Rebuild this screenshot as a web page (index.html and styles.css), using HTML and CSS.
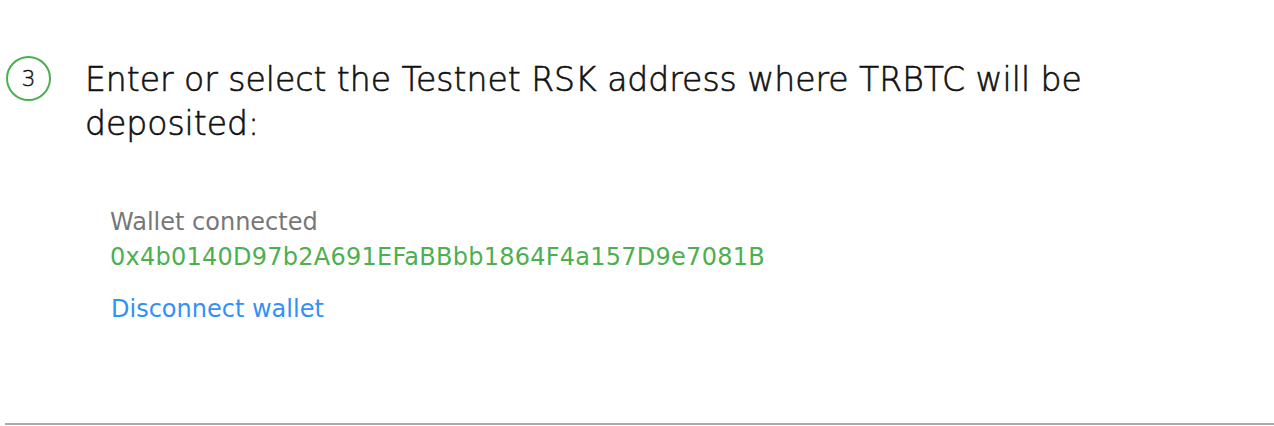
FILE: index.html
```html
<!DOCTYPE html>
<html>
<head>
<meta charset="utf-8">
<link rel="stylesheet" href="styles.css">
</head>
<body>
<div class="page">
  <div class="step">
    <div class="step-num">3</div>
    <div class="step-body">
      <h2 class="step-title">Enter or select the Testnet RSK address where TRBTC will be deposited:</h2>
      <div class="wallet">
        <div class="wallet-label">Wallet connected</div>
        <div class="wallet-address">0x4b0140D97b2A691EFaBBbb1864F4a157D9e7081B</div>
        <a class="wallet-disconnect" href="#">Disconnect wallet</a>
      </div>
    </div>
  </div>
  <hr class="divider">
</div>
</body>
</html>
```
FILE: styles.css
```css
html, body {
  margin: 0;
  padding: 0;
  background: #ffffff;
}
body {
  font-family: "DejaVu Sans", "Noto Sans", sans-serif;
  color: #1c1c1c;
}
.page {
  padding: 56px 0 0 5px;
}
.step {
  display: flex;
  align-items: flex-start;
  gap: 34px;
  height: 367px;
}
.step-num {
  flex: none;
  width: 41px;
  height: 41px;
  border: 2px solid #4caf50;
  border-radius: 50%;
  display: flex;
  align-items: center;
  justify-content: center;
  font-size: 22px;
  font-weight: 300;
  color: #111;
  -webkit-text-stroke: 0.4px #111;
  margin-left: 1px;
}
.step-body {
  padding-top: 1.6px;
}
.step-title {
  margin: 0;
  font-weight: 300;
  font-size: 33px;
  line-height: 44px;
  max-width: 1040px;
  color: #111;
  -webkit-text-stroke: 0.6px #111;
}
.wallet {
  display: flex;
  flex-direction: column;
  align-items: flex-start;
  padding: 60.6px 0 0 25px;
  font-size: 24px;
  line-height: 33px;
}
.wallet-label {
  color: #777777;
}
.wallet-address {
  margin-top: 2px;
  color: #4caf50;
  letter-spacing: 0.25px;
}
.wallet-disconnect {
  margin-top: 19px;
  margin-left: 1px;
  color: #3390f5;
  text-decoration: none;
}
.divider {
  margin: 0;
  border: 0;
  height: 2px;
  background: #aaaaaa;
}
```
